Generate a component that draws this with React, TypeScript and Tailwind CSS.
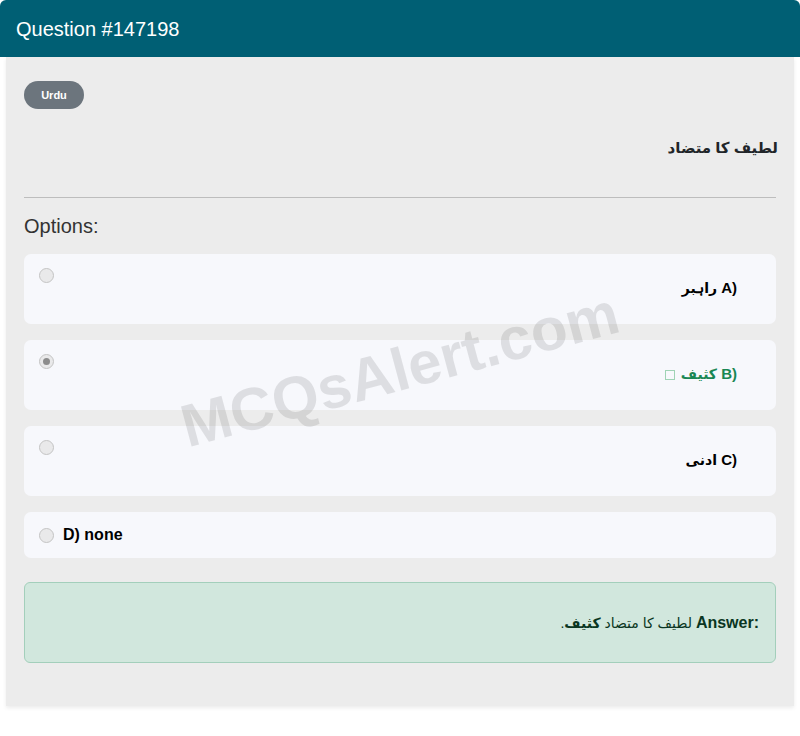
const font = { fontFamily: '"Liberation Sans", "DejaVu Sans", Arial, sans-serif' }

type Option = {
    letter: string
    text: string
    checked?: boolean
    correct?: boolean
}

const options: Option[] = [
    { letter: "A)", text: "راہبر" },
    { letter: "B)", text: "کثیف", checked: true, correct: true },
    { letter: "C)", text: "ادنی" },
]

const Radio = ({ checked }: { checked?: boolean }) => (
    <span className="flex h-[15px] w-[15px] shrink-0 items-center justify-center rounded-full border border-[#c4c4c4] bg-[#e9e9ea]">
        {checked && <span className="h-[7px] w-[7px] rounded-full bg-[#8c8c8c]" />}
    </span>
)

const App = () => {
    return (
        <div className="w-full bg-white pb-[30px] text-[#212529]" style={font}>
            <div className="flex h-[57px] items-center rounded-t-[6px] bg-[#005f74] px-4">
                <span className="text-xl text-white">Question #147198</span>
            </div>

            <div className="relative mx-[6px] bg-[#ececec] px-[18px] pb-[43px] pt-[24px] shadow-[0_2px_4px_rgba(0,0,0,0.08)]">
                <span className="inline-flex h-[28px] w-[60px] items-center justify-center rounded-full bg-[#6c757d] text-[11px] font-bold text-white">
                    Urdu
                </span>

                <h2 dir="rtl" className="mt-[27px] -mr-[2px] text-[15px] font-bold leading-6 text-[#212529]">
                    لطیف کا متضاد
                </h2>

                <hr className="mt-[37px] border-t border-[#bdbdbd]" />

                <p className="mt-[13px] text-xl leading-[30px] text-[#333]">Options:</p>

                <ul className="mt-[13px] space-y-4">
                    {options.map((opt) => (
                        <li key={opt.letter} className="h-[70px] rounded-[7px] bg-[#f7f8fc] px-[15px] pt-[14px]">
                            <Radio checked={opt.checked} />
                            <div
                                dir="rtl"
                                className={`-mt-[5px] pr-[24px] text-[15px] font-bold leading-5 ${opt.correct ? "text-[#198754]" : "text-black"}`}
                            >
                                <span dir="ltr" className="[unicode-bidi:isolate]">{opt.letter + "\u200E"}</span>{" "}
                                <span className="text-[14px]">{opt.text}</span>
                                {opt.correct && (
                                    <span className="mr-[6px] inline-block h-[10px] w-[10px] border border-[#9fd3b5] align-[-1px]" />
                                )}
                            </div>
                        </li>
                    ))}
                    <li className="flex h-[46px] items-center gap-[9px] rounded-[7px] bg-[#f7f8fc] px-[15px]">
                        <Radio />
                        <span className="text-base font-bold text-black">D) none</span>
                    </li>
                </ul>

                <div className="mt-[24px] flex h-[81px] items-center rounded-[6px] border border-[#a3cfbb] bg-[#d1e7dd] px-[16px]">
                    <p dir="rtl" className="w-full text-[14px] text-[#0a3622]">
                        <span dir="ltr" className="text-base font-bold [unicode-bidi:isolate]">{"Answer:\u200E"}</span>{" "}
                        لطیف کا متضاد <strong>کثیف</strong>.
                    </p>
                </div>

                <div className="pointer-events-none absolute left-0 right-0 top-[283px] z-10 flex justify-center">
                    <span className="rotate-[-15deg] text-[60px] font-bold leading-none text-black/[0.1]">
                        MCQsAlert.com
                    </span>
                </div>
            </div>
        </div>
    )
}

export default App
